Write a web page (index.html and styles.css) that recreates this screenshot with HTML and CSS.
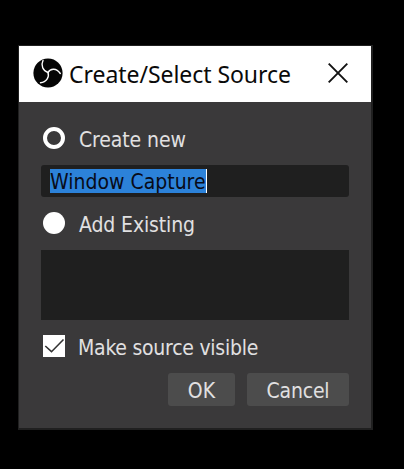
FILE: index.html
```html
<!DOCTYPE html>
<html lang="en">
<head>
<meta charset="utf-8">
<title>Create/Select Source</title>
<link rel="stylesheet" href="styles.css">
</head>
<body>
<main class="dialog">
  <header class="titlebar">
    <svg class="logo" viewBox="0 0 30 30" aria-hidden="true">
      <circle cx="15" cy="15" r="14.6" fill="#050505"/>
      <g fill="none" stroke="#fff" stroke-width="1.4" stroke-linecap="round">
        <path d="M10 2.500C7.500 7.500 10 13 15 14.500"/>
        <path d="M15 14.500C17.500 10 23.500 10 27.300 15.500"/>
        <path d="M15 14.500C16.500 19 13.500 24.500 7.500 24.800"/>
      </g>
    </svg>
    <h1 class="title">Create/Select Source</h1>
    <svg class="close" viewBox="0 0 20 20" aria-hidden="true"><path d="M.7.700 19.300 19.300M19.300.700.700 19.300" stroke="#111" stroke-width="1.900"/></svg>
  </header>
  <form class="body">
    <div class="option"><span class="radio checked"></span><span class="label create">Create new</span></div>
    <div class="field"><span class="selection">Window Capture</span></div>
    <div class="option second"><span class="radio"></span><span class="label existing">Add Existing</span></div>
    <div class="list"></div>
    <div class="option third"><svg class="checkbox" viewBox="0 0 22 22" aria-hidden="true"><path fill="#fff" d="M0 0h22v22H0z"/><path d="M2.300 11 8.500 16.700 20.500 4.500" fill="none" stroke="#333" stroke-width="1.600"/></svg><span class="label visible">Make source visible</span></div>
    <div class="actions"><div class="button ok"><span>OK</span></div><div class="button cancel"><span>Cancel</span></div></div>
  </form>
</main>
</body>
</html>
```
FILE: styles.css
```css
* { box-sizing: border-box; }
body {
  margin: 0;
  padding: 45px 0 0 18px;
  height: 469px;
  overflow: hidden;
  background: #000;
  font: 21px/26px "DejaVu Sans Condensed", "DejaVu Sans", sans-serif;
  font-stretch: condensed;
  color: #e1e0e1;
  white-space: nowrap;
}
.dialog { width: 355px; height: 385px; border: 1px solid #202020; border-right-width: 2px; border-bottom-width: 2px; background: #3a393a; }
.titlebar { display: flex; align-items: center; height: 56px; padding: 0 23px 0 14px; background: #fff; }
.logo { width: 30px; height: 30px; margin-top: -3px; }
.title { margin: 0 0 0 6px; font: 23px/32px "Noto Sans", sans-serif; letter-spacing: -0.05px; color: #0a0a0a; }
.close { width: 20px; height: 20px; margin: -2px 0 0 auto; }
.body { padding: 23px 22px 0; }
.option { display: flex; align-items: center; height: 26px; padding-left: 2px; }
.radio { width: 22px; height: 22px; border-radius: 50%; background: #fff; }
.radio.checked { background: transparent; border: 4px solid #fff; }
.label { margin-left: 14px; padding-top: 3px; }
.create { letter-spacing: -0.1px; }
.existing { letter-spacing: -0.12px; }
.field { display: flex; align-items: center; height: 32px; margin-top: 14px; padding-left: 9px; border-radius: 3px; background: #1f1f1f; }
.selection { height: 24px; line-height: 26px; background: #2c82d9; color: #080b18; border-right: 1px solid #fff; }
.second { margin-top: 13px; }
.list { height: 70px; margin-top: 14px; background: #1f1f1f; }
.third { margin-top: 13px; }
.checkbox { width: 22px; height: 22px; }
.visible { margin-left: 13px; letter-spacing: -0.25px; }
.actions { display: flex; justify-content: flex-end; gap: 12px; margin-top: 14px; }
.button { display: flex; align-items: center; justify-content: center; height: 33px; padding-top: 2px; border-radius: 3px; background: #4c4c4c; }
.ok { width: 67px; }
.cancel { width: 102px; letter-spacing: -0.2px; }
```
